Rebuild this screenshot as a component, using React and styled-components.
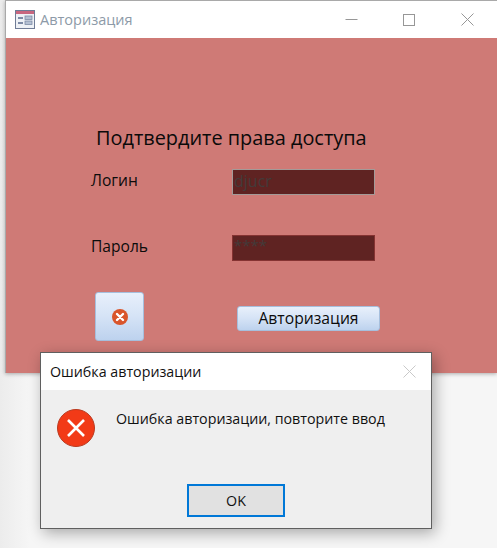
import React from 'react';
import styled, { createGlobalStyle } from 'styled-components';

const GlobalStyle = createGlobalStyle`
  html, body {
    margin: 0;
    padding: 0;
    background: #f6f6f6;
  }
  body {
    font-family: "Open Sans", "Noto Sans", "Liberation Sans", sans-serif;
  }
`;

const Desktop = styled.div`
  position: relative;
  width: 497px;
  height: 548px;
  overflow: hidden;
  background: linear-gradient(90deg, #ececec 0, #f6f6f6 30px);
`;

const MainWindow = styled.div`
  margin-left: 5px;
  height: 373px;
  border-left: 1px solid #a9a9a9;
  border-top: 1px solid #a9a9a9;
  box-sizing: border-box;
  display: flex;
  flex-direction: column;
  box-shadow: 0 1px 4px rgba(0, 0, 0, 0.3);
`;

const TitleBar = styled.div`
  height: 37px;
  flex-shrink: 0;
  background: #fff;
  display: flex;
  align-items: center;
  padding-left: 9px;
`;

const WindowTitle = styled.span`
  font-size: 14.5px;
  color: #8d9aa8;
  margin-left: 5px;
  flex: 1;
`;

const WinButton = styled.div`
  width: 58px;
  height: 37px;
  flex-shrink: 0;
  display: flex;
  align-items: center;
  justify-content: center;
  margin-right: ${props => props.$right || 0}px;
`;

const Body = styled.div`
  flex: 1;
  background: #cf7a76;
  padding: 87px 0 0 85px;
`;

const Heading = styled.h1`
  margin: 0 0 0 5px;
  font-size: 19.9px;
  line-height: 26px;
  font-weight: 400;
  color: #0a0a0a;
  white-space: nowrap;
`;

const Row = styled.div`
  display: flex;
  align-items: flex-start;
  height: 26px;
  margin-top: ${props => props.$top}px;
`;

const Label = styled.label`
  width: 141px;
  font-size: 15.6px;
  line-height: 22px;
  color: #0c0c0c;
`;

const Field = styled.div`
  width: 143px;
  height: 26px;
  box-sizing: border-box;
  background: #5f2322;
  border: 1px solid ${props => (props.$active ? '#a39a98' : '#853332')};
  color: #433b3a;
  padding-left: 1px;
  font-size: ${props => (props.$secret ? 15 : 16)}px;
  line-height: ${props => (props.$secret ? 18 : 23)}px;
  overflow: hidden;
`;

const Actions = styled.div`
  display: flex;
  align-items: center;
  margin: 31px 0 0 4px;
`;

const GlossButton = styled.button`
  box-sizing: border-box;
  padding: 0;
  border: 1px solid #a6bfdd;
  border-radius: 3px;
  background: linear-gradient(180deg, #e8f0fb 0%, #d5e3f6 50%, #bdd2ee 100%);
  display: flex;
  align-items: center;
  justify-content: center;
  font-family: inherit;
  color: #0c0c0c;
`;

const IconButton = styled(GlossButton)`
  width: 49px;
  height: 49px;
`;

const SubmitButton = styled(GlossButton)`
  width: 143px;
  height: 25px;
  margin: 4px 0 0 93px;
  padding-bottom: 1px;
  font-size: 15.7px;
`;

const Dialog = styled.div`
  position: absolute;
  left: 40px;
  top: 352px;
  width: 392px;
  height: 177px;
  box-sizing: border-box;
  border: 1px solid #5f5f5f;
  background: #efefef;
  box-shadow: 3px 4px 14px rgba(0, 0, 0, 0.32);
  display: flex;
  flex-direction: column;
`;

const DialogTitleBar = styled.div`
  height: 37px;
  background: #fff;
  display: flex;
  align-items: center;
  justify-content: space-between;
  padding: 0 15px 0 9px;
  flex-shrink: 0;
`;

const DialogTitle = styled.span`
  font-size: 14.25px;
  color: #111;
`;

const Message = styled.div`
  display: flex;
  align-items: flex-start;
  gap: 21px;
  padding: 19px 0 0 16px;
  flex: 1;
`;

const MessageText = styled.p`
  margin: 0;
  font-size: 14.25px;
  line-height: 20px;
  color: #111;
`;

const OkButton = styled.button`
  align-self: flex-start;
  width: 98px;
  height: 33px;
  margin: 0 0 11px 146px;
  padding: 0 0 1px;
  box-sizing: border-box;
  border: 2px solid #0078d7;
  background: #e1e1e1;
  font-family: inherit;
  font-size: 14.25px;
  color: #111;
`;

const FormIcon = () => (
  <svg width="20" height="20" viewBox="0 0 20 20" style={{ display: 'block' }}>
    <rect x="0.5" y="0.5" width="19" height="18" fill="#eef1f6" stroke="#6f7c96" />
    <rect x="1" y="1" width="18" height="3" fill="#c8667f" />
    <rect x="3" y="7" width="5" height="2" fill="#7c8aa5" />
    <rect x="3" y="12" width="5" height="2" fill="#7c8aa5" />
    <rect x="10" y="6" width="7" height="3.5" fill="#b4c0d3" stroke="#7c8aa5" strokeWidth="0.8" />
    <rect x="10" y="11" width="7" height="3.5" fill="#b4c0d3" stroke="#7c8aa5" strokeWidth="0.8" />
  </svg>
);

const MinimizeIcon = () => (
  <svg width="13" height="13" viewBox="0 0 13 13"><path d="M0.5 6.5h12" stroke="#979797" fill="none" /></svg>
);

const MaximizeIcon = () => (
  <svg width="12" height="12" viewBox="0 0 12 12"><rect x="0.5" y="0.5" width="11" height="11" stroke="#979797" fill="none" /></svg>
);

const CloseIcon = ({ color = '#979797' }) => (
  <svg width="13" height="13" viewBox="0 0 13 13"><path d="M0.5 0.5l12 12M12.5 0.5l-12 12" stroke={color} fill="none" /></svg>
);

const SmallErrorIcon = () => (
  <svg width="16" height="16" viewBox="0 0 16 16">
    <circle cx="8" cy="8" r="8" fill="#d9552b" />
    <path d="M5 5l6 6M11 5l-6 6" stroke="#fff" strokeWidth="2.4" strokeLinecap="round" />
  </svg>
);

const ErrorIcon = () => (
  <svg width="38" height="38" viewBox="0 0 38 38" style={{ flexShrink: 0 }}>
    <circle cx="19" cy="19" r="18.5" fill="#f23a17" stroke="#b93a20" />
    <path d="M11 11l16 16M27 11l-16 16" stroke="#fff" strokeWidth="2.6" fill="none" />
  </svg>
);

export default function App() {
  return (
    <Desktop>
      <GlobalStyle />
      <MainWindow>
        <TitleBar>
          <FormIcon />
          <WindowTitle>Авторизация</WindowTitle>
          <WinButton><MinimizeIcon /></WinButton>
          <WinButton><MaximizeIcon /></WinButton>
          <WinButton $right={1}><CloseIcon /></WinButton>
        </TitleBar>
        <Body>
          <Heading>Подтвердите права доступа</Heading>
          <Row $top={18}>
            <Label>Логин</Label>
            <Field $active>djucr</Field>
          </Row>
          <Row $top={40}>
            <Label>Пароль</Label>
            <Field $secret>****</Field>
          </Row>
          <Actions>
            <IconButton aria-label="Закрыть"><SmallErrorIcon /></IconButton>
            <SubmitButton>Авторизация</SubmitButton>
          </Actions>
        </Body>
      </MainWindow>
      <Dialog>
        <DialogTitleBar>
          <DialogTitle>Ошибка авторизации</DialogTitle>
          <CloseIcon color="#c9c9c9" />
        </DialogTitleBar>
        <Message>
          <ErrorIcon />
          <MessageText>Ошибка авторизации, повторите ввод</MessageText>
        </Message>
        <OkButton>OK</OkButton>
      </Dialog>
    </Desktop>
  );
}
